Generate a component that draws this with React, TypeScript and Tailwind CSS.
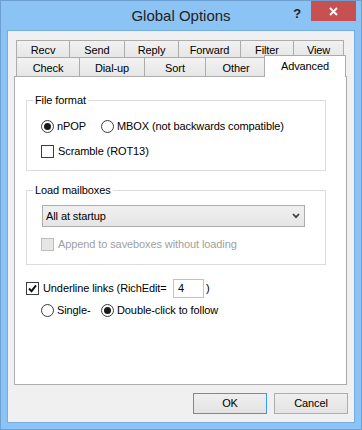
const tabs1 = [
  { label: "Recv", w: "w-[54px]" },
  { label: "Send", w: "w-[56px]" },
  { label: "Reply", w: "w-[55px]" },
  { label: "Forward", w: "w-[63px]" },
  { label: "Filter", w: "w-[54px]" },
  { label: "View", w: "w-[51px]" },
];

const tabs2 = [
  { label: "Check", w: "w-[64px]" },
  { label: "Dial-up", w: "w-[66px]" },
  { label: "Sort", w: "w-[62px]" },
  { label: "Other", w: "w-[62px]" },
];

function Radio({ on }: { on?: boolean }) {
  return (
    <span className="flex h-[13px] w-[13px] shrink-0 items-center justify-center rounded-full border border-[#3c3c3c] bg-white">
      {on && <span className="h-[7px] w-[7px] rounded-full bg-[#1a1a1a]" />}
    </span>
  );
}

function Check({ on, disabled }: { on?: boolean; disabled?: boolean }) {
  return (
    <span
      className={
        disabled
          ? "flex h-[13px] w-[13px] shrink-0 items-center justify-center border border-[#bcbcbc] bg-[#e6e6e6]"
          : "flex h-[13px] w-[13px] shrink-0 items-center justify-center border border-[#3c3c3c] bg-white"
      }
    >
      {on && (
        <svg width="9" height="9" viewBox="0 0 9 9">
          <path d="M1 4.5 L3.5 7.2 L8 1.3" fill="none" stroke="#111" strokeWidth="1.9" />
        </svg>
      )}
    </span>
  );
}

export default function App() {
  return (
    <div className="flex h-[430px] w-[362px] flex-col border border-[#6d9fd0] bg-[#8bc4f4] font-['Liberation_Sans',Arial,sans-serif] text-[11px] tracking-[-0.1px] text-black">
      {/* title bar */}
      <div className="grid h-[29px] shrink-0 grid-cols-[1fr_auto_1fr]">
        <div />
        <div className="self-center pt-[1px] text-[15px] tracking-normal text-[#222]">Global Options</div>
        <div className="flex items-start justify-end pr-[5px]">
          <span className="mr-[10px] mt-[3px] text-[13px] font-bold text-[#222]">?</span>
          <button className="flex h-[20px] w-[45px] items-center justify-center bg-[#c75050]">
            <svg width="9" height="9" viewBox="0 0 9 9">
              <path d="M1 1 L8 8 M8 1 L1 8" stroke="#fff" strokeWidth="2" />
            </svg>
          </button>
        </div>
      </div>

      {/* client */}
      <div className="mx-[6px] mb-[6px] flex flex-1 flex-col border border-[#74ade1] bg-[#f0f0f0]">
        <div className="ml-[8px] mt-[9px] flex h-[17px]">
          {tabs1.map((t, i) => (
            <div
              key={t.label}
              className={`${t.w} ${i ? "-ml-px" : ""} flex items-center justify-center border-x border-t border-[#acacac] bg-linear-to-b from-[#f2f2f2] to-[#e6e6e6] pt-[3px]`}
            >
              {t.label}
            </div>
          ))}
        </div>
        <div className="ml-[8px] flex h-[19px]">
          {tabs2.map((t, i) => (
            <div
              key={t.label}
              className={`${t.w} ${i ? "-ml-px" : ""} flex items-center justify-center border-x border-t border-[#acacac] bg-linear-to-b from-[#f2f2f2] to-[#e6e6e6] pt-[3px]`}
            >
              {t.label}
            </div>
          ))}
          <div className="relative z-10 -ml-[3px] -mt-[2px] flex h-[22px] w-[82px] items-center justify-center border-x border-t border-[#acacac] bg-white pb-[1px]">
            Advanced
          </div>
        </div>

        {/* panel */}
        <div className="ml-[6px] flex h-[309px] w-[333px] flex-col border border-[#adadad] bg-white">
          <fieldset className="ml-[11px] mt-[16px] w-[300px] border border-[#dcdcdc] pb-[11px]">
            <legend className="ml-[6px] px-[2px] leading-[15px]">File format</legend>
            <div className="ml-[14px] mt-[10px] flex h-[16px] items-center">
              <div className="flex w-[60px] items-center gap-[3px]">
                <Radio on />
                <span>nPOP</span>
              </div>
              <div className="flex items-center gap-[3px]">
                <Radio />
                <span>MBOX (not backwards compatible)</span>
              </div>
            </div>
            <div className="ml-[14px] mt-[9px] flex h-[16px] items-center gap-[4px]">
              <Check />
              <span>Scramble (ROT13)</span>
            </div>
          </fieldset>

          <fieldset className="ml-[11px] mt-[12px] w-[300px] border border-[#dcdcdc] pb-[12px]">
            <legend className="ml-[6px] px-[2px] leading-[15px]">Load mailboxes</legend>
            <div className="ml-[15px] mt-[7px] flex h-[22px] w-[263px] items-center justify-between border border-[#acacac] bg-linear-to-b from-[#f0f0f0] to-[#e5e5e5] pl-[3px] pr-[4px]">
              <span>All at startup</span>
              <svg width="8" height="6" viewBox="0 0 8 6">
                <path d="M1 1 L4 4.2 L7 1" fill="none" stroke="#404040" strokeWidth="1.8" />
              </svg>
            </div>
            <div className="ml-[14px] mt-[9px] flex h-[16px] items-center gap-[4px] text-[#a0a0a0]">
              <Check disabled />
              <span>Append to saveboxes without loading</span>
            </div>
          </fieldset>

          <div className="ml-[11px] mt-[13px] flex h-[20px] items-center">
            <div className="flex w-[147px] items-center gap-[4px]">
              <Check on />
              <span>Underline links (RichEdit=</span>
            </div>
            <div className="flex h-[19px] w-[31px] items-center border border-[#c3c3c3] pl-[4px]">4</div>
            <span className="ml-[2px]">)</span>
          </div>
          <div className="ml-[26px] mt-[4px] flex h-[16px] items-center">
            <div className="flex w-[60px] items-center gap-[3px]">
              <Radio />
              <span>Single-</span>
            </div>
            <div className="flex items-center gap-[3px]">
              <Radio on />
              <span>Double-click to follow</span>
            </div>
          </div>
        </div>

        {/* buttons */}
        <div className="mr-[6px] mt-[8px] flex justify-end gap-[7px]">
          <button className="h-[21px] w-[74px] border border-[#3c98ec] bg-linear-to-b from-[#efefef] to-[#e3e3e3]">OK</button>
          <button className="h-[21px] w-[74px] border border-[#adadad] bg-linear-to-b from-[#efefef] to-[#e3e3e3]">Cancel</button>
        </div>
      </div>
    </div>
  );
}
